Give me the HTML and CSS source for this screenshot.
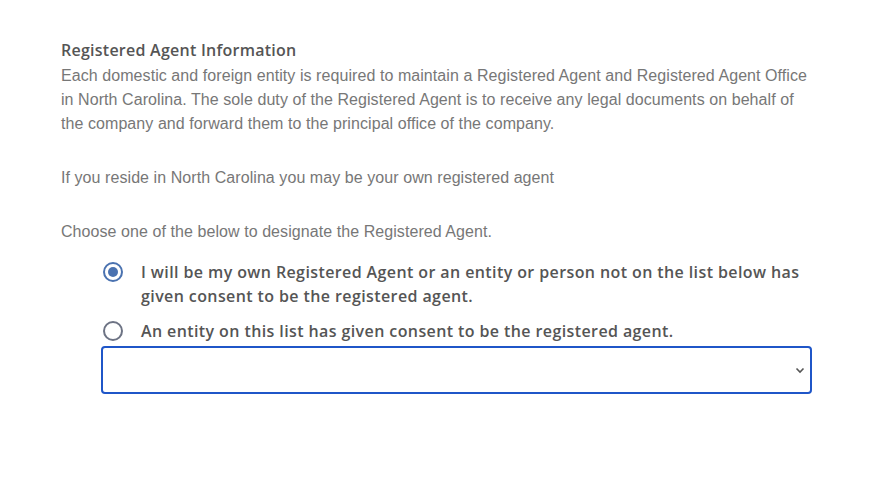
FILE: index.html
```html
<!DOCTYPE html>
<html>
<head>
<meta charset="utf-8">
<link rel="stylesheet" href="styles.css">
</head>
<body>
<div class="page">
  <h2 class="title">Registered Agent Information</h2>
  <p class="text">Each domestic and foreign entity is required to maintain a Registered Agent and Registered Agent Office in North Carolina. The sole duty of the Registered Agent is to receive any legal documents on behalf of the company and forward them to the principal office of the company.</p>
  <p class="text gap">If you reside in North Carolina you may be your own registered agent</p>
  <p class="text gap">Choose one of the below to designate the Registered Agent.</p>
  <div class="options">
    <label class="option">
      <span class="radio checked"></span>
      <span class="label">I will be my own Registered Agent or an entity or person not on the list below has given consent to be the registered agent.</span>
    </label>
    <label class="option">
      <span class="radio"></span>
      <span class="label">An entity on this list has given consent to be the registered agent.</span>
    </label>
    <div class="select">
      <svg class="chev" width="10" height="7" viewBox="0 0 10 7"><path d="M1.5 1.5 L5 5 L8.5 1.5" fill="none" stroke="#555" stroke-width="1.6"/></svg>
    </div>
  </div>
</div>
</body>
</html>
```
FILE: styles.css
```css
html, body { margin: 0; padding: 0; background: #fff; }
.page { padding: 38px 0 0 61px; width: 752px; }
.title {
  margin: 0;
  font-family: "Open Sans", sans-serif;
  font-weight: 600;
  font-size: 16px;
  line-height: 24px;
  color: #555;
  letter-spacing: 0.25px;
}
.text {
  margin: 2px 0 0;
  font-family: "Liberation Sans", Arial, sans-serif;
  font-size: 16px;
  line-height: 24px;
  color: #777;
  letter-spacing: 0.07px;
}
.gap { margin-top: 30px; }
.options { padding-left: 40px; margin-top: 16px; width: 711px; }
.option { display: flex; align-items: flex-start; gap: 18px; margin-bottom: 11px; }
.option:last-of-type { margin-bottom: 3px; }
.radio {
  flex: none;
  width: 20px; height: 20px;
  box-sizing: border-box;
  border: 2px solid #6d7384;
  border-radius: 50%;
  margin: 2px 0 0 2px;
  position: relative;
}
.radio.checked { border-color: #4a72b0; }
.radio.checked::after {
  content: "";
  position: absolute;
  left: 3px; top: 3px;
  width: 10px; height: 10px;
  border-radius: 50%;
  background: #4a72b0;
}
.label {
  font-family: "Open Sans", sans-serif;
  font-weight: 600;
  font-size: 16px;
  line-height: 24px;
  color: #555;
  letter-spacing: 0.4px;
}
.select {
  height: 48px;
  box-sizing: border-box;
  border: 2px solid #1f56c8;
  border-radius: 4px;
  display: flex;
  align-items: center;
  justify-content: flex-end;
  padding-right: 5px;
}
```
